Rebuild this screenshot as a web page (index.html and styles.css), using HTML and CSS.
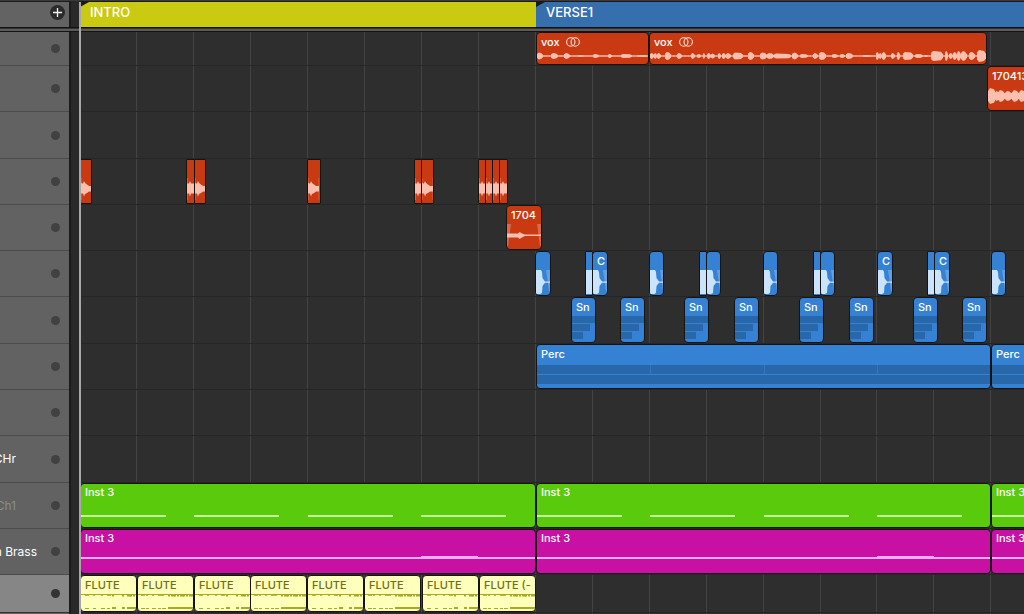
FILE: index.html
```
<!DOCTYPE html>
<html lang="en">
<head>
<meta charset="utf-8">
<title>Arrangement</title>
<link rel="stylesheet" href="styles.css">
</head>
<body>
<main class="arranger">
  <header class="ruler">
    <div class="ruler-tools">
      <button class="add" type="button" aria-label="Add marker">
        <svg width="15" height="15" viewBox="0 0 15 15" aria-hidden="true"><circle cx="7.5" cy="7.5" r="7.5" fill="#2b2b2b"/><path d="M7.5 3v9M3 7.5h9" stroke="#f2f2f2" stroke-width="1.3"/></svg>
      </button>
    </div>
    <div class="gutter"></div>
    <div class="markers">
      <div class="marker marker-intro">INTRO</div>
      <div class="marker marker-verse">VERSE1</div>
    </div>
  </header>
  <div class="divider"></div>
  <section class="tracks" id="tracks">
    <div class="grid-lines" id="grid-lines"></div>
  </section>
  <div class="playhead"></div>
</main>
<script src="arranger.js"></script>
</body>
</html>
```
FILE: styles.css
```
:root {
  --sidebar: 69px;
  --gutter: 11px;
  --origin: 80px;
}

* { box-sizing: border-box; }

body {
  margin: 0;
  background: #2e2e2e;
  color: #fff;
  font-family: Inter, "Liberation Sans", sans-serif;
  font-size: 11px;
  line-height: 14px;
}

.arranger {
  position: relative;
  display: flex;
  flex-direction: column;
  height: 100vh;
  overflow: hidden;
}

.ruler, .track {
  display: grid;
  grid-template-columns: var(--sidebar) var(--gutter) minmax(0, 1fr);
}

.ruler {
  flex: none;
  height: 28px;
  border-top: 1px solid #3a3a3a;
  border-bottom: 1px solid #111;
}

.ruler-tools {
  display: flex;
  align-items: flex-start;
  justify-content: flex-end;
  padding: 3px 4px 0 0;
  background: #636363;
  border-top: 1px solid #1c1c1c;
}

.add {
  display: flex;
  padding: 0;
  border: 0;
  background: none;
}

.gutter {
  background: #292929;
  border-left: 2px solid #1b1b1b;
}

.markers {
  display: flex;
  background: #1a1a1a;
  padding-top: 1px;
}

.marker {
  flex: 1;
  padding: 0 10px;
  font-size: 13px;
  font-weight: 500;
  line-height: 21px;
  clip-path: polygon(0 5px, 9px 0, 100% 0, 100% 100%, 0 100%);
}

.marker-intro { flex: 0 0 456px; background: #caca12; }
.marker-verse { background: #366fae; }

.divider {
  flex: none;
  height: 4px;
  background: #5c5c5e;
  border-top: 1px solid #333;
  border-bottom: 1px solid #141414;
}

.tracks {
  position: relative;
  flex: 1;
}

.grid-lines {
  position: absolute;
  inset: 0 0 0 var(--origin);
}

.grid-line {
  position: absolute;
  left: var(--x);
  width: 1px;
  height: 100%;
  background: #434343;
}

.track { height: 46px; }
.track-first { height: 34px; }
.track-tall { height: 47px; }
.track-short { height: 38px; }

.track-head {
  display: flex;
  align-items: center;
  justify-content: space-between;
  padding-right: 9px;
  background: #626262;
  border-bottom: 1px solid #4b4b4b;
}

.track-selected .track-head { background: #868686; border-color: #333; }

.track-name {
  display: flex;
  justify-content: flex-end;
  width: 16px;
  overflow: hidden;
  font-size: 12px;
  line-height: 16px;
  white-space: nowrap;
}

.track-name-wide { width: 37px; }
.track-name-muted { color: #8c8c8c; }

.dot {
  flex: none;
  width: 9px;
  height: 9px;
  border-radius: 50%;
  background: #414141;
}

.track-selected .dot { background: #333; }

.lane {
  position: relative;
  border-bottom: 1px solid #262626;
}

.clip {
  position: absolute;
  top: 0;
  bottom: 0;
  left: var(--x);
  width: var(--w);
  overflow: hidden;
  border: 1px solid #141414;
  border-radius: 4px;
}

.clip-slim { border-radius: 1px; }
.clip-red { background: #c93a12; --wave: #fcbfae; }
.clip-blue { background: #3581d4; --wave: #cbe4fd; }
.clip-green { background: #5acb0c; --wave: #c5f79b; }
.clip-magenta { background: #c810a4; --wave: #f9b0ea; }
.clip-cream { background: #feffbb; color: #6d6e18; --wave: #a9aa22; }

.clip-art {
  position: absolute;
  inset: 0;
  width: 100%;
  height: 100%;
  fill: var(--wave);
}

.clip-label {
  position: relative;
  display: flex;
  align-items: center;
  gap: 6px;
  padding: 2px 4px;
  font-weight: 500;
  white-space: nowrap;
}

.clip-green .clip-label,
.clip-magenta .clip-label { padding-top: 1px; }

.playhead {
  position: absolute;
  top: 2px;
  bottom: 0;
  left: calc(var(--origin) - 1px);
  width: 2px;
  background: #a8a8a8;
}
```
FILE: arranger.js
```
const ORIGIN = 80;
const GRID = [136, 193, 250, 307, 364, 421, 478, 535, 592, 649, 706, 763, 820, 876, 933, 990];
const END = 1040;

// Bursts are [start, end, amplitude] in pixels from the clip's left edge.
const VOX_A = [[0,6,3.5],[14,21,3],[27,33,3],[41,47,1],[56,62,2],[71,75,2],[84,95,2],[100,110,1]];
const VOX_B = [[0,4,3],[4,7,3],[7,11,3],[15,21,4],[27,32,3],[41,45,3],[47,51,2],[53,55,3],[57,61,3],[61,65,2.5],[68,71,3],
  [72,76,3],[76,81,3],[83,93,3.5],[98,104,4],[110,117,3.5],[117,124,3],[124,141,2.5],[142,148,3.5],[150,158,2],[163,168,3],
  [169,176,4],[182,188,2],[190,195,2],[196,203,3],[213,222,1],[226,229,4],[229,232,3],[232,236,4],[241,245,3],[247,250,4],
  [253,263,4],[265,273,2],[274,278,1],[281,293,5],[295,298,5],[299,303,3],[303,307,4],[307,311,5],[311,317,5],[319,325,4],[327,336,6]];
const TAKE = [[0,8,8],[7,11,5],[10,17,6],[17,24,5],[24,31,6],[31,38,6],[38,45,5]];

const rect = (x, y, w, h, extra = '') => `<rect x="${x}" y="${y}" width="${w}" height="${h}" ${extra}/>`;

function bursts(list, mid, base) {
  const blobs = list.map(([a, b, h]) => {
    const e = Math.min(2, (b - a) / 3), s = h * 0.6;
    return `<path d="M${a} ${mid - s}L${a + e} ${mid - h}L${b - e} ${mid - h * 0.85}L${b} ${mid - s * 0.6}V${mid + s * 0.6}L${b - e} ${mid + h * 0.85}L${a + e} ${mid + h}L${a} ${mid + s}Z"/>`;
  });
  return rect(0, mid - base, '100%', base * 2) + blobs.join('');
}

const art = {
  voxA: () => bursts(VOX_A, 23, 0.7),
  voxB: () => bursts(VOX_B, 23, 0.7),
  take: () => bursts(TAKE, 29, 3),
  bounce: () => '<path opacity=".35" d="M0 18h4l-3 22h-1zM34 18h-4l3 22h1z"/><path d="M0 27.5H11L12.5 26L15 27.5L18 28.5H34V30H18L15 31.5L12.5 33L11 31.5H0Z"/>',
  hitCut: () => '<path opacity=".3" d="M0 18h1v22h-1z"/><path d="M0 23.5H2L3 21L4 23.5H7V33.5H4L3 36.5L2 33.5H0Z"/>',
  hit: () => '<path d="M0 22.5L1 23.5H2L3 21L4 23L6 24.5L8 26H11V31.5H8L6 33L4 34L3 36.5L2 33.5H0Z"/><path opacity=".3" d="M0 18h.7v22h-.7zM10.5 18h.7v22h-.7z"/>',
  clap: () => '<path d="M0 18H5L6 20L6.5 26L9 29.5H14V30.7H9L6.5 34L6 41L4 42H0Z"/><path opacity=".3" d="M10 18h4v21h-1z"/>',
  clapCut: () => '<path d="M0 18H7V42H0Z"/>',
  snare: () => `<g fill="#2967ab">${rect(0, 18, '100%', 7)}${rect(0, 26, 18, 7)}${rect(0, 34, 11, 7)}</g>`,
  perc: () => `<g fill="#2967ab">${rect(0, 20, '100%', 9)}${rect(0, 30, '100%', 9)}</g>` +
    [113, 227, 340].map(x => rect(x, 20, 1, 9, 'fill="#3277c3"')).join(''),
  chords: () => [0, 113, 227, 340].map(x => rect(x, 31, 85, 2)).join(''),
  bass: () => rect(0, 27, 340, 2) + rect(340, 26, 57, 3) + rect(397, 27, '100%', 2),
  flute: () => flute(false),
  fluteFull: () => flute(true)
};

function flute(full) {
  const lows = full ? [3,8,14,20,24,30,33,36,39,42,45,48,51] : [4,12,20,26,31,41,46,49,52];
  return rect(0, 18, '100%', 1) +
    lows.map((x, i) => rect(x, 19, i % 3 ? 2 : 4, x > 29 ? 1.5 : 0.8) + rect(x, x > 29 ? 31 : 32, i % 2 ? 3 : 4, x > 29 ? 2 : 1)).join('');
}

const clip = (color, start, end, drawing, label = '', options = {}) => ({ color, start, end, drawing, label, ...options });
const slim = { slim: true };

const claps = [[535,551],[585,593,1],[592,608,0,'C'],[649,664],[699,707,1],[706,721],[763,778],[813,821,1],[820,835],
  [877,893,0,'C'],[927,935,1],[934,950,0,'C'],[991,1006]]
  .map(([a, b, cut, label]) => clip('blue', a, b, cut ? 'clapCut' : 'clap', label, { slim: !!cut }));

const phrase = (color, drawing, label) => [[80, 536],[536, 991],[991, END]].map(([a, b]) => clip(color, a, b, drawing, label));

const tracks = [
  { size: 'first', clips: [clip('red', 536, 649, 'voxA', 'vox', { stereo: true }), clip('red', 649, 987, 'voxB', 'vox', { stereo: true })] },
  { clips: [clip('red', 987, END, 'take', '170413')] },
  { size: 'tall' },
  { clips: [
    clip('red', 80, 92, 'hit', '', slim),
    clip('red', 186, 195, 'hitCut', '', slim), clip('red', 194, 206, 'hit', '', slim),
    clip('red', 307, 321, 'hit', '', slim),
    clip('red', 414, 422, 'hitCut', '', slim), clip('red', 421, 434, 'hit', '', slim),
    ...[478, 485, 492, 499].map(x => clip('red', x, x + 9, 'hitCut', '', slim))
  ] },
  { clips: [clip('red', 506, 542, 'bounce', '1704')] },
  { clips: claps },
  { size: 'tall', clips: [571, 620, 684, 734, 799, 849, 913, 962].map(x => clip('blue', x, x + 25, 'snare', 'Sn')) },
  { clips: phrase('blue', 'perc', 'Perc').slice(1) },
  {},
  { size: 'tall', name: 'CHr' },
  { name: 'Ch1', nameStyle: 'muted', clips: phrase('green', 'chords', 'Inst 3') },
  { name: 'n Brass', nameStyle: 'wide', clips: phrase('magenta', 'bass', 'Inst 3') },
  { size: 'short', selected: true, clips: [80, 137, 194, 250, 307, 364, 422, 479].map((x, i) =>
    clip('cream', x, x + 57, i % 2 ? 'fluteFull' : 'flute', i === 7 ? 'FLUTE (-' : 'FLUTE')) },
  { last: true }
];

const stereoIcon = '<svg width="14" height="10" viewBox="0 0 14 10" fill="none" stroke="#fde3da" stroke-width="1.1" aria-label="stereo"><circle cx="4.8" cy="5" r="4.2"/><circle cx="9.2" cy="5" r="4.2"/></svg>';

function renderClip(c) {
  return `<div class="clip clip-${c.color}${c.slim ? ' clip-slim' : ''}" style="--x:${c.start - ORIGIN}px;--w:${c.end - c.start}px">
    <svg class="clip-art" aria-hidden="true">${art[c.drawing]()}</svg>
    ${c.label ? `<div class="clip-label">${c.label}${c.stereo ? stereoIcon : ''}</div>` : ''}</div>`;
}

function renderTrack(t) {
  const name = `<span class="track-name${t.nameStyle ? ' track-name-' + t.nameStyle : ''}">${t.name || ''}</span>`;
  return `<div class="track${t.size ? ' track-' + t.size : ''}${t.selected ? ' track-selected' : ''}">
    <div class="track-head">${name}${t.last ? '' : '<span class="dot"></span>'}</div>
    <div class="gutter"></div>
    <div class="lane">${(t.clips || []).map(renderClip).join('')}</div></div>`;
}

document.getElementById('grid-lines').innerHTML =
  GRID.map(x => `<span class="grid-line" style="--x:${x - ORIGIN}px"></span>`).join('');
document.getElementById('tracks').insertAdjacentHTML('beforeend', tracks.map(renderTrack).join(''));
```
